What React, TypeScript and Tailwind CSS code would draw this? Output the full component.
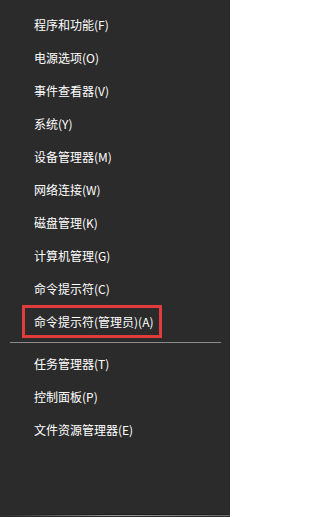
const items = [
  '程序和功能(F)',
  '电源选项(O)',
  '事件查看器(V)',
  '系统(Y)',
  '设备管理器(M)',
  '网络连接(W)',
  '磁盘管理(K)',
  '计算机管理(G)',
  '命令提示符(C)',
];

const lower = ['任务管理器(T)', '控制面板(P)', '文件资源管理器(E)'];

function Item({ label }: { label: string }) {
  return (
    <div className="h-[33px] flex items-center pl-[34px] text-white">
      {label}
    </div>
  );
}

export default function App() {
  return (
    <div
      className="w-[230px] h-[517px] bg-[#2b2b2b] flex flex-col pt-[8px] text-[12px] leading-none"
      style={{ fontFamily: '"Microsoft YaHei", "Noto Sans CJK SC", sans-serif' }}
    >
      {items.map((label) => (
        <Item key={label} label={label} />
      ))}

      {/* highlighted entry */}
      <div className="ml-[22px] w-[140px] h-[33px] box-border border-[3px] border-[#e23b3b] flex items-center pl-[9px] text-white">
        命令提示符(管理员)(A)
      </div>

      <div className="mt-[4px] ml-[10px] w-[211px] h-px bg-[#8c8c8c]" />

      <div className="mt-[4px]">
        {lower.map((label) => (
          <Item key={label} label={label} />
        ))}
      </div>

      <div className="mt-auto">
        <div className="h-px bg-gradient-to-r from-[#2b2b2b] via-[#1c1c1c] to-[#1f1f1f]" />
        <div className="h-px bg-gradient-to-r from-[#2b2b2b] via-[#9a9a9a] to-[#6e6e6e]" />
        <div className="h-px bg-[#2a2a2a]" />
      </div>
    </div>
  );
}
